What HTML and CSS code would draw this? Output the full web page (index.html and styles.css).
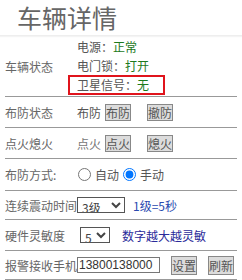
FILE: index.html
```html
<!DOCTYPE html>
<html lang="zh-CN">
<head>
  <meta charset="UTF-8">
  <meta name="viewport" content="width=device-width, initial-scale=1.0">
  <title>车辆详情</title>
  <link rel="stylesheet" href="styles.css">
</head>
<body>
  <div class="title">车辆详情</div>

  <div class="list">
    <div class="row row-status">
      <div class="label">车辆状态</div>
      <div class="value">
        <div class="line">电源：<span class="ok">正常</span></div>
        <div class="line">电门锁：<span class="ok">打开</span></div>
        <div class="line gps">卫星信号：<span class="ok">无</span></div>
      </div>
    </div>

    <div class="row">
      <div class="label">布防状态</div>
      <div class="value">
        <span>布防</span>
        <button class="btn">布防</button>
        <button class="btn btn-far">撤防</button>
      </div>
    </div>

    <div class="row">
      <div class="label">点火熄火</div>
      <div class="value">
        <span class="dim">点火</span>
        <button class="btn">点火</button>
        <button class="btn btn-far">熄火</button>
      </div>
    </div>

    <div class="row row-tall">
      <div class="label">布防方式:</div>
      <div class="value">
        <label class="radio"><input type="radio" name="mode">自动</label>
        <label class="radio"><input type="radio" name="mode" checked>手动</label>
      </div>
    </div>

    <div class="row row-short">
      <div class="label">连续震动时间</div>
      <div class="value">
        <select class="sel sel-level">
          <option>3级</option>
        </select>
        <span class="tip">1级=5秒</span>
      </div>
    </div>

    <div class="row">
      <div class="label">硬件灵敏度</div>
      <div class="value">
        <select class="sel sel-num">
          <option>5</option>
        </select>
        <span class="tip tip-dark">数字越大越灵敏</span>
      </div>
    </div>

    <div class="row row-short">
      <div class="label">报警接收手机</div>
      <div class="value">
        <input class="phone" type="text" value="13800138000">
        <button class="btn btn-set">设置</button>
        <button class="btn btn-set">刷新</button>
      </div>
    </div>
  </div>
</body>
</html>
```

FILE: styles.css
```css
* {
  margin: 0;
  padding: 0;
  box-sizing: border-box;
}

body {
  font-family: "Noto Sans CJK SC", "Liberation Sans", sans-serif;
  font-size: 12px;
  color: #555;
  background: #fff;
}

.title {
  height: 36px;
  padding-left: 17px;
  font-size: 25px;
  line-height: 34px;
  color: #666;
  border-bottom: 1px solid #eee;
  box-shadow: 0 1px 1px #f4f4f4;
}

.list {
  margin: 0 5px;
}

.row {
  display: flex;
  align-items: center;
  height: 31px;
  border-bottom: 1px solid #999;
}

.row-status {
  height: 61px;
}

.row-tall {
  height: 32px;
}

.row-short {
  height: 29px;
}

.label {
  width: 72px;
  white-space: nowrap;
  color: #666;
}

.value {
  display: flex;
  align-items: center;
  white-space: nowrap;
  color: #555;
}

.row-status .value {
  display: block;
}

.line {
  height: 19px;
  line-height: 19px;
}

.ok {
  color: #1d7a1d;
}

.gps {
  width: 97px;
  margin-left: -9px;
  padding-left: 7px;
  border: 2px solid #e0141c;
  line-height: 15px;
  height: 20px;
}

.dim {
  color: #777;
}

.btn {
  height: 17px;
  padding: 0;
  margin-left: 4px;
  font-family: inherit;
  font-size: 12px;
  line-height: 15px;
  color: #555;
  background: #dcdcdc;
  border: 1px solid #888;
}

.btn-far {
  margin-left: 16px;
}

.radio {
  display: flex;
  align-items: center;
  margin-right: 3px;
}

.radio input {
  width: 13px;
  height: 13px;
  margin: 0 4px 0 1px;
}

.sel {
  height: 16px;
  font-family: inherit;
  font-size: 12px;
  color: #444;
  border: 1px solid #555;
  background: #fff;
}

.sel-level {
  width: 48px;
}

.sel-num {
  width: 30px;
  margin-left: 3px;
}

.tip {
  margin-left: 8px;
  color: #2a4ab0;
}

.tip-dark {
  margin-left: 12px;
  color: #2a2a9a;
}

.phone {
  width: 83px;
  height: 16px;
  padding-left: 1px;
  font-family: "Liberation Sans", sans-serif;
  font-size: 12px;
  color: #333;
  border: 1px solid #777;
}

.btn-set {
  height: 19px;
  margin-left: 11px;
}
```
